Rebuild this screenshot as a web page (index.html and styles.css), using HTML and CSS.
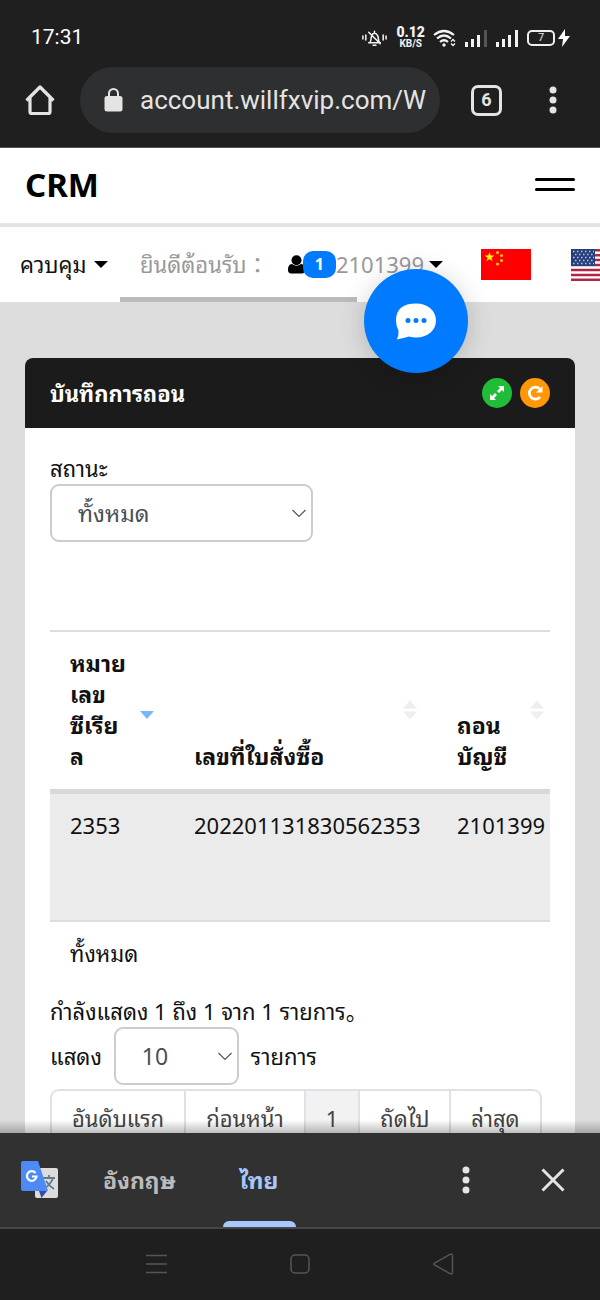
FILE: index.html
```html
<!DOCTYPE html>
<html lang="th">
<head>
<meta charset="utf-8">
<meta name="viewport" content="width=device-width, initial-scale=1">
<title>CRM</title>
<link rel="stylesheet" href="styles.css">
</head>
<body>
<div class="screen">
  <div class="chrome">
    <div class="status">
      <span class="clock">17:31</span>
      <div class="status-icons">
        <svg width="27" height="20" viewBox="0 0 28 20" fill="none" stroke="#f2f2f2" stroke-width="1.6" stroke-linecap="round"><path d="M2 8v3M5 7v5M23 7v5M26 8v3M8 15h12M9 15c2-2 1-5 2-7q1-3 3-3t3.500 3c1 3 0 5 2 7M14 3v2M8 4l12 12"/><path d="M12.500 17.500h3"/></svg>
        <span class="speed"><b>0.12</b><small>KB/S</small></span>
        <svg width="24" height="20" viewBox="0 0 24 20" fill="none" stroke="#f2f2f2" stroke-width="2.200"><path d="M1 7Q11-1 21 7M4 10.500q7-6 14 0M7 14q4-3.500 8 0"/><circle cx="11" cy="17" r="1.700" fill="#f2f2f2" stroke="none"/><path d="M18 13.500l2-2 2 2M18 15.500l2 2 2-2" stroke-width="1.400"/></svg>
        <svg width="23" height="18" viewBox="0 0 23 18" fill="#f2f2f2"><path d="M0 13h3v5H0zM6 10h3v8H6zM12 6h3v12h-3z"/><path fill="#555" d="M19 1h3v17h-3z"/></svg>
        <svg width="23" height="18" viewBox="0 0 23 18" fill="#f2f2f2"><path d="M0 13h3v5H0zM6 10h3v8H6zM12 6h3v12h-3zM19 1h3v17h-3z"/></svg>
        <span class="battery"><span class="level">7</span><svg width="12" height="18" viewBox="0 0 12 18"><path d="M7 0 0 10h5L4 18 12 7H7z" fill="#fff"/></svg></span>
      </div>
    </div>
    <div class="toolbar">
      <button class="icon-btn" aria-label="Home"><svg width="30" height="30" viewBox="0 0 30 30" fill="none" stroke="#e4e4e4" stroke-width="3.200" stroke-linejoin="round"><path d="M1.500 15.500 15 2l13.500 13.500M5 12.500V27q0 1.500 1.500 1.500h17Q25 28.500 25 27V12.500"/></svg></button>
      <a class="address" href="#">
        <svg width="19" height="24" viewBox="0 0 19 24"><rect x="0.500" y="8" width="18" height="15.500" rx="2.500" fill="#e4e4e4"/><path d="M5 9V5.500a4.500 4.500 0 0 1 9 0V9" fill="none" stroke="#e4e4e4" stroke-width="2"/></svg>
        <span class="url">account.willfxvip.com/W</span>
      </a>
      <button class="tabs" aria-label="Tabs">6</button>
      <button class="icon-btn" aria-label="Menu"><svg width="8" height="28" viewBox="0 0 8 28" fill="#e4e4e4"><circle cx="4" cy="4" r="3.500"/><circle cx="4" cy="14" r="3.500"/><circle cx="4" cy="24" r="3.500"/></svg></button>
    </div>
  </div>

  <div class="page">
    <header class="site-head">
      <a class="brand" href="#">CRM</a>
      <button class="burger" aria-label="Menu"><span></span><span></span></button>
    </header>
    <nav class="site-nav">
      <a class="nav-link" href="#">ควบคุม <i class="caret"></i></a>
      <a class="welcome" href="#"><span>ยินดีต้อนรับ<span class="colon" lang="zh-TW">：</span></span>
        <svg width="17" height="19" viewBox="0 0 17 19"><circle cx="8.500" cy="5.300" r="5"/><path d="M4 9c-3 0-4 3-4 6 0 2 1 3.500 3 3.500h11c2 0 3-1.500 3-3.500 0-3-1-6-4-6q-4.500 3.500-9 0z"/></svg><span class="badge">1</span><span>2101399</span><i class="caret tight"></i></a>
      <button class="flag" aria-label="中文"><svg width="50" height="31" viewBox="0 0 50 31"><path fill="#f00" d="M0 0h50v31H0z"/><path fill="#ff0" d="m8.500 3 1.200 3.500h3.700l-3 2.200 1.200 3.600-3.100-2.200-3.100 2.200 1.200-3.600-3-2.200h3.700z"/><g fill="#fc0"><circle cx="16.500" cy="3.500" r="1.500"/><circle cx="20.500" cy="6.500" r="1.500"/><circle cx="20.500" cy="11.500" r="1.500"/><circle cx="16.500" cy="15" r="1.500"/></g></svg></button>
      <button class="flag" aria-label="English"><svg width="50" height="32" viewBox="0 0 50 32"><path fill="#fff" d="M0 0h50v32H0z"/><path stroke="#b22545" stroke-width="2.460" d="M0 1.200h50M0 6.200h50M0 11.100h50M0 16h50M0 20.900h50M0 25.900h50M0 30.800h50"/><path fill="#26407c" d="M0 0h24v17H0z"/><path stroke="#b9c3dc" stroke-width="1.500" stroke-dasharray="1.500 2.500" d="M2 2.500h21M4 5.500h18M2 8.500h21M4 11.500h18M2 14.500h21"/></svg></button>
      <span class="scroll-mark"></span>
    </nav>
    <main class="content">
      <section class="card">
        <div class="card-head">
          <h1>บันทึกการถอน</h1>
          <button class="round green" aria-label="Expand"><svg width="16" height="16" viewBox="0 0 16 16" fill="#fff"><path d="M9 1h6v6l-2-2-3 3-2-2 3-3zM7 15H1V9l2 2 3-3 2 2-3 3z"/></svg></button>
          <button class="round orange" aria-label="Reload"><svg width="16" height="16" viewBox="0 0 16 16"><path d="M13 12A6 6 0 1 1 12.500 3.800" fill="none" stroke="#fff" stroke-width="2.800"/><path d="M15.500 1v6.500H9z" fill="#fff"/></svg></button>
        </div>
        <div class="card-body">
          <label class="field" for="state">สถานะ</label>
          <div class="select wide">
            <select id="state"><option>ทั้งหมด</option></select>
            <svg class="chevron" width="14" height="9" viewBox="0 0 14 9"><path d="m0.500 1 6.500 6.500L13.500 1" fill="none" stroke="#555" stroke-width="1.200"/></svg>
          </div>
          <div class="table-wrap">
            <table>
              <colgroup><col class="c1"><col class="c2"><col class="c3"></colgroup>
              <thead><tr>
                <th>หมาย<br>เลข<br>ซีเรีย<br>ล<svg class="sort" width="14" height="20" viewBox="0 0 14 20"><path fill="#7db5fb" d="M0 11h14l-7 8z"/></svg></th>
                <th>เลขที่ใบสั่งซื้อ<svg class="sort" width="14" height="20" viewBox="0 0 14 20"><path fill="#eee" d="M0 8.500h14l-7-8zM0 11.500h14l-7 8z"/></svg></th>
                <th>ถอน<br>บัญชี<svg class="sort" width="14" height="20" viewBox="0 0 14 20"><path fill="#eee" d="M0 8.500h14l-7-8zM0 11.500h14l-7 8z"/></svg></th>
              </tr></thead>
              <tbody><tr><td>2353</td><td>202201131830562353</td><td>2101399</td></tr></tbody>
              <tfoot><tr><td colspan="3">ทั้งหมด</td></tr></tfoot>
            </table>
          </div>
          <p class="info">กำลังแสดง 1 ถึง 1 จาก 1 รายการ。</p>
          <div class="length">
            <label for="len">แสดง</label>
            <div class="select small">
              <select id="len"><option>10</option></select>
              <svg class="chevron" width="14" height="9" viewBox="0 0 14 9"><path d="m0.500 1 6.500 6.500L13.500 1" fill="none" stroke="#555" stroke-width="1.200"/></svg>
            </div>
            <span>รายการ</span>
          </div>
          <div class="pager">
            <button>อันดับแรก</button><button>ก่อนหน้า</button><button class="current">1</button><button>ถัดไป</button><button>ล่าสุด</button>
          </div>
        </div>
      </section>
    </main>
    <button class="chat" aria-label="Chat"><svg width="40" height="37" viewBox="0 0 40 37"><path fill="#fff" d="M20 .5c11.500 0 20 7 20 17s-8.500 17-20 17q-4 0-7-1-5 1.500-12 3 2-5 1.500-9Q0 23.500 0 17.500 0 .5 20 .5z"/><g fill="#007bff"><circle cx="12" cy="17.500" r="2.500"/><circle cx="20" cy="17.500" r="2.500"/><circle cx="28" cy="17.500" r="2.500"/></g></svg></button>
    <span class="shade"></span>
  </div>

  <div class="translate">
    <svg width="38" height="38" viewBox="0 0 38 38"><rect x="14" y="7" width="23" height="30" rx="2" fill="#dcdcdc"/><path d="M22 17h12M28 14v3M32 17q-2 6-8 10M25 20q3 5 8 8" fill="none" stroke="#607d8b" stroke-width="1.800"/><path d="m18 30 8 0-5.500 7z" fill="#3949ab"/><path d="M2 0h15l10 30H2q-2 0-2-2V2q0-2 2-2z" fill="#4c8bf5"/><path d="M14.500 12a4.800 4.800 0 1 0 1 3.500h-4.500" fill="none" stroke="#fff" stroke-width="2.200"/></svg>
    <button class="lang">อังกฤษ</button>
    <button class="lang active">ไทย</button>
    <span class="spacer"></span>
    <button class="icon-btn more" aria-label="More"><svg width="8" height="28" viewBox="0 0 8 28" fill="#e4e4e4"><circle cx="4" cy="4" r="3.500"/><circle cx="4" cy="14" r="3.500"/><circle cx="4" cy="24" r="3.500"/></svg></button>
    <button class="icon-btn" aria-label="Close"><svg width="24" height="24" viewBox="0 0 24 24" stroke="#e4e4e4" stroke-width="3"><path d="m1.500 1.500 21 21M22.500 1.500l-21 21"/></svg></button>
  </div>
  <div class="system-nav">
    <button class="icon-btn" aria-label="Recent"><svg width="21" height="20" viewBox="0 0 21 20" stroke="#555" stroke-width="1.500"><path d="M0 1.500h21M0 10h21M0 18.500h21"/></svg></button>
    <button class="icon-btn" aria-label="Home"><svg width="20" height="20" viewBox="0 0 20 20" fill="none" stroke="#555" stroke-width="1.500"><rect x="1" y="1" width="18" height="18" rx="4"/></svg></button>
    <button class="icon-btn" aria-label="Back"><svg width="21" height="22" viewBox="0 0 21 22" fill="none" stroke="#555" stroke-width="1.500"><path d="M17.500 1.200 1.500 10q-1 1 0 2l16 8.800q2 .5 2-1.300v-17q0-1.800-2-1.300z"/></svg></button>
  </div>
</div>
</body>
</html>
```
FILE: styles.css
```css
* { box-sizing: border-box; }
body { margin: 0; font-family: "Noto Sans", "Noto Sans Thai Looped", "Noto Looped Thai", "Loma", "Noto Sans CJK SC", sans-serif; font-size: 22px; line-height: 31px; color: #111; }
button, select { font: inherit; color: inherit; margin: 0; padding: 0; border: 0; background: none; }
a { color: inherit; text-decoration: none; }
svg { display: block; flex: none; }
.screen { height: 100vh; display: flex; flex-direction: column; overflow: hidden; }

.chrome { flex: none; background: #1f1f1f; border-bottom: 1px solid #555; font-family: Roboto, sans-serif; color: #e4e4e4; }
.status { display: flex; justify-content: space-between; align-items: center; height: 67px; padding: 8px 30px 0 31px; }
.clock { font-size: 21px; color: #fff; }
.status-icons { display: flex; align-items: center; gap: 8px; }
.speed { display: flex; flex-direction: column; align-items: center; color: #f2f2f2; font-weight: 700; }
.speed b { font-size: 14px; line-height: 13px; }
.speed small { font-size: 10px; line-height: 10px; }
.battery { display: flex; align-items: center; gap: 3px; }
.level { width: 28px; height: 16px; border: 2px solid #eee; border-radius: 5px; font-size: 11px; line-height: 12px; text-align: center; }
.toolbar { display: flex; align-items: center; height: 80px; padding: 0 43px 14px 25px; }
.icon-btn { display: grid; place-items: center; flex: none; }
.address { flex: 1; min-width: 0; display: flex; align-items: center; gap: 17px; height: 66px; margin: 0 31px 0 25px; padding: 0 13px 0 24px; border-radius: 33px; background: #2e2f31; }
.url { overflow: hidden; white-space: nowrap; font-size: 26px; line-height: 36px; }
.tabs { flex: none; width: 31px; height: 31px; margin-right: 47px; border: 3px solid #e4e4e4; border-radius: 7px; font-size: 18px; line-height: 24px; font-weight: 700; }

.page { flex: 1; min-height: 0; position: relative; overflow: hidden; background: #ddd; }
.site-head { display: flex; align-items: center; justify-content: space-between; height: 79px; padding: 0 25px 2px; background: #fff; border-bottom: 4px solid #e4e4e4; }
.brand { font-size: 33px; line-height: 46px; font-weight: 700; color: #000; }
.burger { display: grid; gap: 7px; width: 40px; }
.burger span { height: 3px; border-radius: 2px; background: #000; }
.site-nav { position: relative; display: flex; align-items: center; height: 75px; padding-left: 20px; overflow: hidden; background: #fff; white-space: nowrap; color: #999; }
.nav-link { display: flex; align-items: center; gap: 8px; width: 120px; flex: none; color: #111; }
.caret { border: 7px solid transparent; border-top-color: #000; border-bottom: 0; flex: none; }
.caret.tight { margin-left: 5px; }
.welcome { display: flex; align-items: center; flex: none; width: 341px; }
.welcome svg { margin: 0 -2px 0 auto; }
.colon { display: inline-block; width: 22px; font-family: "Noto Sans CJK TC", sans-serif; line-height: 24px; }
.badge { position: relative; width: 33px; height: 27px; border-radius: 10px; background: #007bff; color: #fff; font-size: 16px; line-height: 27px; font-weight: 700; text-align: center; }
.welcome .tight { margin-right: 38px; }
.flag { flex: none; margin-right: 40px; }
.scroll-mark { position: absolute; left: 20%; bottom: 0; width: 237px; height: 5px; background: #bbb; }

.content { padding: 56px 25px 0; }
.card { border-radius: 8px; overflow: hidden; background: #fff; }
.card-head { display: flex; align-items: center; gap: 8px; height: 70px; padding: 0 25px; background: #1b1b1b; color: #fff; }
.card-head h1 { flex: 1; margin: 0; font-size: 22px; font-weight: 700; }
.round { display: grid; place-items: center; width: 30px; height: 30px; border-radius: 50%; }
.green { background: #1fbd38; }
.orange { background: #ff9707; }
.card-body { padding: 25px; }
.field { display: block; }
.select { position: relative; border: 2px solid #ccc; border-radius: 9px; height: 58px; color: #495057; }
.select select { appearance: none; width: 100%; height: 100%; padding-left: 26px; font-size: 23px; outline: 0; }
.chevron { position: absolute; right: 5px; top: 23px; pointer-events: none; }
.wide { width: 263px; }
.small { width: 125px; }
.table-wrap { margin-top: 88px; overflow: hidden; }
table { table-layout: fixed; width: 514px; border-collapse: separate; border-spacing: 0; }
.c1 { width: 124px; }
.c2 { width: 263px; }
.c3 { width: 127px; }
th { position: relative; padding: 16px 20px 17px; border-top: 2px solid #ddd; border-bottom: 5px solid #d8d8d8; text-align: left; vertical-align: bottom; white-space: nowrap; font-size: 23px; }
.sort { position: absolute; right: 20px; top: 68px; }
td { padding: 16px 20px 17px; white-space: nowrap; text-align: left; vertical-align: top; }
tbody td { height: 128px; background: #ebebeb; border-bottom: 2px solid #ddd; }
.info { margin: 10px 0 0; }
.length { display: flex; align-items: center; gap: 12px; }
.pager { display: flex; width: fit-content; margin-top: 4px; border: 2px solid #dee2e6; border-radius: 9px; overflow: hidden; color: #444; }
.pager button { height: 58px; padding: 0 20px 4px; border-right: 2px solid #dee2e6; white-space: nowrap; }
.pager button:last-child { border-right: 0; }
.pager .current { background: #f2f2f3; }
.chat { position: absolute; right: 132px; top: 121px; width: 104px; height: 104px; display: grid; place-items: center; border-radius: 50%; background: #007bff; box-shadow: 0 3px 26px rgba(0, 0, 0, .18); }
.shade { position: absolute; inset: auto 0 0; height: 13px; background: linear-gradient(transparent, rgba(0, 0, 0, .25)); }

.translate { flex: none; display: flex; align-items: center; height: 96px; padding: 0 35px 0 21px; background: #313131; border-bottom: 2px solid #45484a; }
.lang { align-self: stretch; margin-left: 44px; border: solid transparent; border-width: 5px 0; color: #bbb; font-size: 23px; font-weight: 700; white-space: nowrap; }
.lang.active { position: relative; width: 73px; margin-left: 47px; color: #a8c7fa; }
.lang.active::after { content: ""; position: absolute; inset: auto 0 -5px; height: 6px; border-radius: 6px 6px 0 0; background: #a8c7fa; }
.spacer { flex: 1; }
.more { margin-right: 71px; }
.system-nav { flex: none; display: flex; justify-content: center; gap: 123px; height: 71px; padding-bottom: 2px; background: #1f1f1f; }
```
